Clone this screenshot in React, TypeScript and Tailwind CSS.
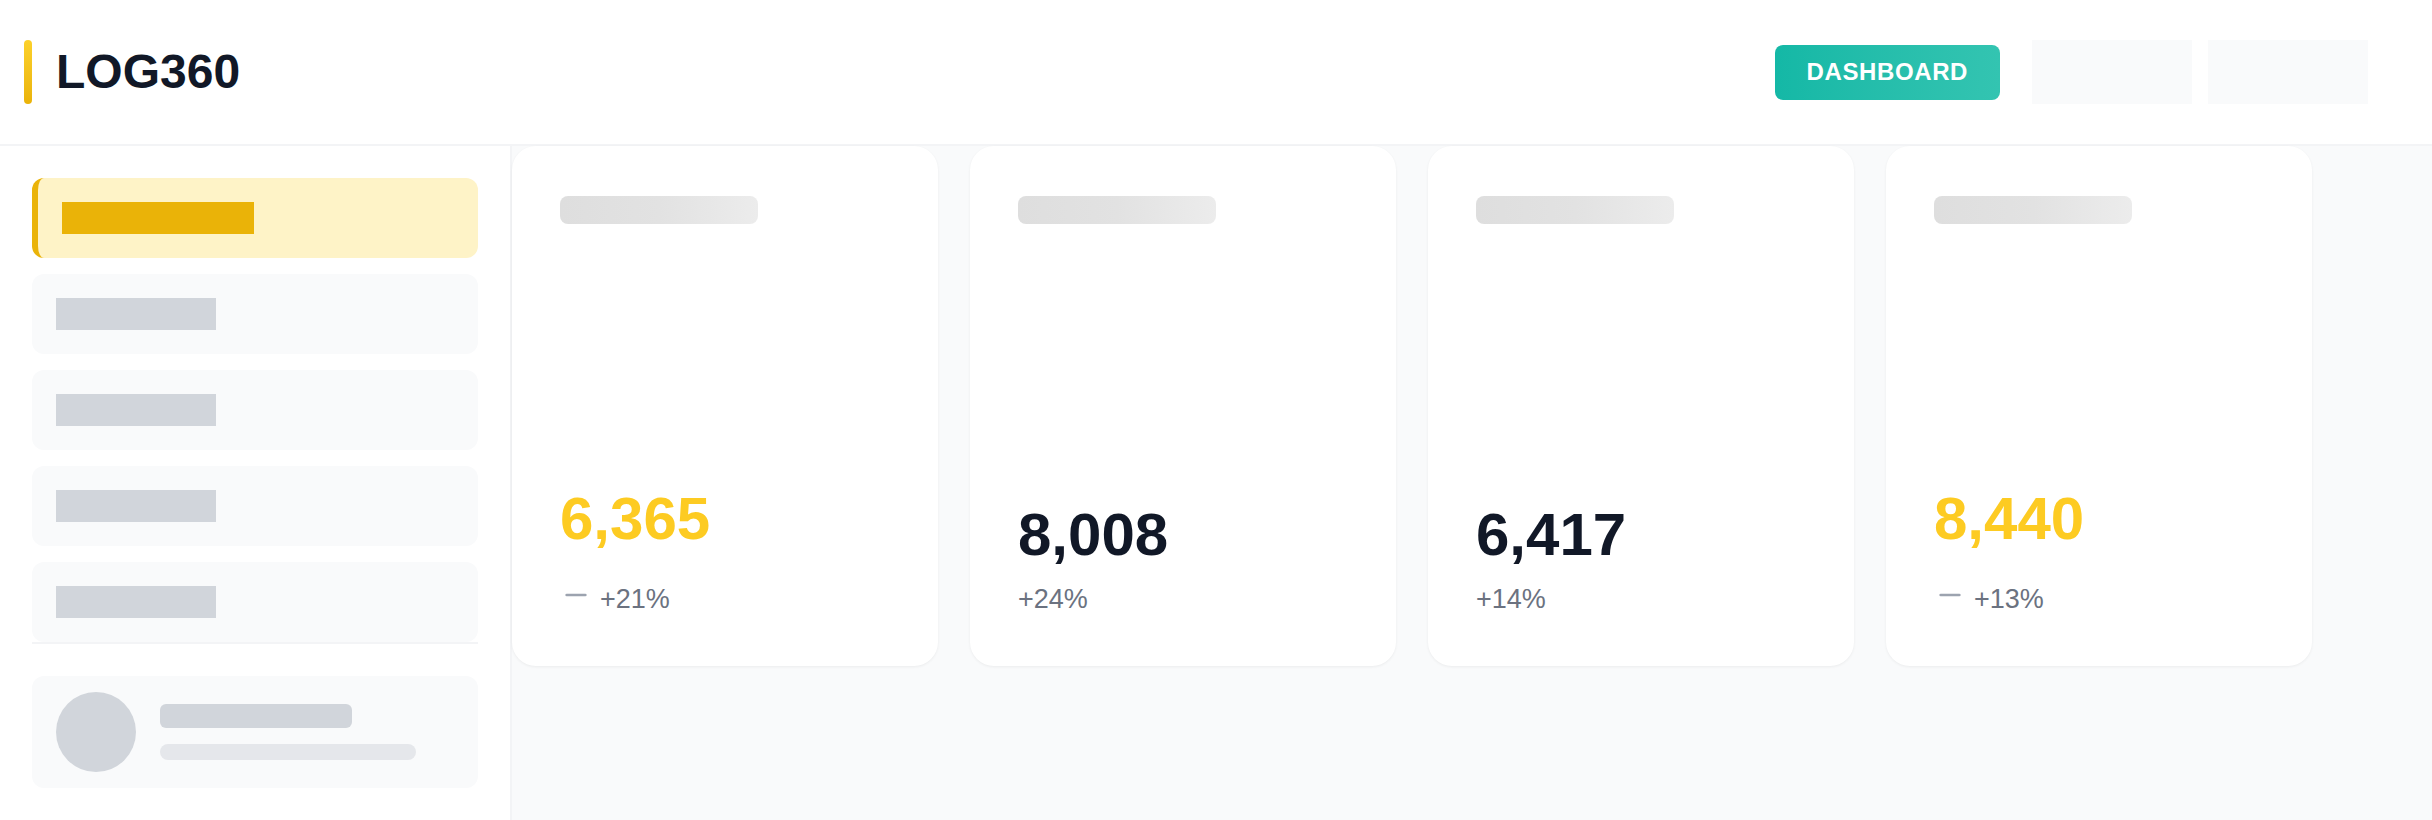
const stats = [
  { value: "6,365", change: "+21%", accent: true },
  { value: "8,008", change: "+24%", accent: false },
  { value: "6,417", change: "+14%", accent: false },
  { value: "8,440", change: "+13%", accent: true },
];

const MinusIcon = () => (
  <svg
    width="32"
    height="32"
    viewBox="0 0 24 24"
    fill="none"
    stroke="#9ca3af"
    strokeWidth="2"
    strokeLinecap="round"
    className="shrink-0"
  >
    <path d="M5 12h14" />
  </svg>
);

const StatCard = ({
  value,
  change,
  accent,
}: {
  value: string;
  change: string;
  accent: boolean;
}) => {
  return (
    <div className="flex h-[520px] flex-col justify-between rounded-3xl bg-white px-12 pt-[50px] pb-[47px] shadow-[0_1px_3px_rgba(0,0,0,0.06)]">
      <div className="h-7 w-[198px] rounded-lg bg-gradient-to-r from-[#dedede] via-[#e2e2e2] to-[#ececec]" />
      <div className="flex flex-col">
        <div
          className={`text-[60px] leading-none font-bold ${
            accent ? "text-[#fdcb22]" : "text-[#111827]"
          }`}
        >
          {value}
        </div>
        <div
          className={`flex items-start gap-2 ${accent ? "mt-[30px]" : "mt-[14px]"}`}
        >
          {accent && <MinusIcon />}
          <span className="text-[27px] leading-[1.5] text-[#6b7280]">
            {change}
          </span>
        </div>
      </div>
    </div>
  );
};

export default function App() {
  return (
    <div className="flex h-[820px] flex-col bg-white font-['Liberation_Sans',Arial,sans-serif]">
      <header className="flex h-[146px] shrink-0 items-center border-b-2 border-[#f3f4f6] pr-16 pl-6">
        <div className="flex items-center gap-6">
          <div className="h-16 w-2 rounded-full bg-gradient-to-b from-[#fcd12a] to-[#eab308]" />
          <h1 className="text-[48px] leading-none font-bold text-[#111827]">
            LOG360
          </h1>
        </div>
        <div className="ml-auto flex items-center">
          <button className="flex h-[55px] items-center rounded-lg bg-gradient-to-r from-[#14b8a6] to-[#33c4b1] px-8 text-[24px] font-bold tracking-[0.025em] text-white">
            DASHBOARD
          </button>
          <div className="ml-8 h-16 w-[160px] bg-[#f9fafb]" />
          <div className="ml-4 h-16 w-[160px] bg-[#f9fafb]" />
        </div>
      </header>

      <div className="flex min-h-0 flex-1">
        <aside className="flex w-[512px] shrink-0 flex-col border-r-2 border-[#f3f4f6] px-8 pt-8">
          <nav className="flex flex-col gap-4 border-b-2 border-[#f3f4f6]">
            <div className="flex h-20 items-center rounded-xl border-l-[6px] border-[#eab308] bg-[#fef3c7] pl-6">
              <div className="h-8 w-[192px] bg-[#eab308]" />
            </div>
            {[0, 1, 2, 3].map((i) => (
              <div key={i} className="flex h-20 items-center rounded-xl bg-[#f9fafb] pl-6">
                <div className="h-8 w-[160px] bg-[#d1d5db]" />
              </div>
            ))}
          </nav>
          <div className="mt-8 flex h-28 items-center gap-6 rounded-xl bg-[#f9fafb] px-6">
            <div className="h-20 w-20 shrink-0 rounded-full bg-[#d1d5db]" />
            <div className="flex flex-col gap-4">
              <div className="h-6 w-[192px] rounded-md bg-[#d1d5db]" />
              <div className="h-4 w-[256px] rounded-full bg-[#e5e7eb]" />
            </div>
          </div>
        </aside>

        <main className="flex-1 bg-[#f9fafb]">
          <div className="grid w-[1800px] grid-cols-4 gap-8">
            {stats.map((s) => (
              <StatCard key={s.value} {...s} />
            ))}
          </div>
        </main>
      </div>
    </div>
  );
}
